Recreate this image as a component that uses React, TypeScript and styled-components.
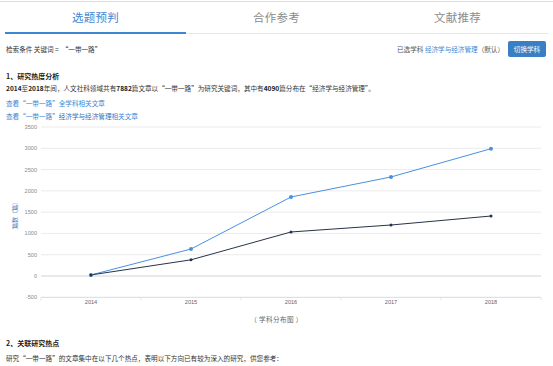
import styled, { createGlobalStyle } from "styled-components";

const GlobalStyle = createGlobalStyle`
  body {
    margin: 0;
    background: #ffffff;
    font-family: "Noto Sans CJK SC", "Noto Sans", sans-serif;
    color: #333333;
  }
`;

const Page = styled.div`
  width: 553px;
  height: 366px;
  overflow: hidden;
  border-top: 1px solid #dedede;
  margin-top: 1px;
  box-sizing: border-box;
`;

const TabBar = styled.div`
  display: flex;
  margin: 0 5px;
  border-bottom: 1px solid #e8e8e8;
`;

const Tab = styled.div<{ $active?: boolean }>`
  flex: 1;
  height: 30px;
  display: flex;
  align-items: center;
  justify-content: center;
  font-size: 11.5px;
  letter-spacing: 0.3px;
  color: ${(props) => (props.$active ? "#3d86d4" : "#8c8c8c")};
  border-bottom: 2px solid
    ${(props) => (props.$active ? "#3d86d4" : "transparent")};
  margin-bottom: -1px;
`;

const FilterRow = styled.div`
  display: flex;
  align-items: center;
  justify-content: space-between;
  margin: 7px 7px 0 6px;
  height: 16px;
  font-size: 6.6px;
`;

const FilterLeft = styled.div`
  color: #333;
`;

const FilterRight = styled.div`
  display: flex;
  align-items: center;
  gap: 4px;
  color: #555;
`;

const Link = styled.span<{ $strong?: boolean }>`
  color: ${(props) => (props.$strong ? "#2f6fb5" : "#3d86d4")};
`;

const SwitchButton = styled.button`
  height: 16px;
  width: 38px;
  padding: 0;
  border: none;
  border-radius: 2px;
  background: #3a7fc4;
  color: #ffffff;
  font-family: inherit;
  font-size: 6.6px;
`;

const Section = styled.div`
  padding: 0 6px;
`;

const SectionTitle = styled.div<{ $top: number }>`
  margin-top: ${(props) => props.$top}px;
  font-size: 7px;
  font-weight: 700;
  color: #222;
  height: 12px;
  line-height: 12px;
`;

const Para = styled.div<{ $top?: number }>`
  margin-top: ${(props) => props.$top ?? 0}px;
  font-size: 6.6px;
  line-height: 12px;
  height: 12px;
  color: #333;
  white-space: nowrap;

  b {
    font-weight: 700;
    color: #222;
  }
`;

const LinkLine = styled.div<{ $top: number }>`
  margin-top: ${(props) => props.$top}px;
  font-size: 6.6px;
  line-height: 12px;
  height: 12px;
  white-space: nowrap;
`;

const ChartBox = styled.svg`
  display: block;
`;

const Caption = styled.div`
  text-align: center;
  font-size: 6.6px;
  letter-spacing: 0.4px;
  color: #666;
  height: 12px;
  line-height: 12px;
  margin-top: 5px;
`;

const years = ["2014", "2015", "2016", "2017", "2018"];
const blueData = [25, 634, 1856, 2326, 2990];
const darkData = [25, 380, 1034, 1198, 1409];

const yOf = (v: number) => 276 - v * 0.04257;
const xOf = (i: number) => 91 + i * 100;

const Chart = () => {
  const ticks: number[] = [];
  for (let v = -500; v <= 3500; v += 500) ticks.push(v);
  const pts = (d: number[]) => d.map((v, i) => `${xOf(i)},${yOf(v)}`).join(" ");

  return (
    <ChartBox width={553} height={186} viewBox="0 122 553 186">
      {ticks.map((v) => (
        <g key={v}>
          <line
            x1={41}
            x2={541}
            y1={yOf(v)}
            y2={yOf(v)}
            stroke={v === 0 ? "#c8c8c8" : v === -500 ? "#d9e2ec" : "#e6e6e6"}
            strokeWidth={v === -500 ? 1.2 : 0.8}
          />
          <text
            x={37}
            y={yOf(v) + 2}
            textAnchor="end"
            fontSize={5.6}
            fill="#8a8a8a"
            fontFamily="Liberation Sans, sans-serif"
          >
            {v}
          </text>
        </g>
      ))}
      {[41, 141, 241, 341, 441, 541].map((x) => (
        <line key={x} x1={x} x2={x} y1={297.3} y2={300.5} stroke="#d9e2ec" strokeWidth={0.8} />
      ))}
      {years.map((y, i) => (
        <text
          key={y}
          x={xOf(i)}
          y={304}
          textAnchor="middle"
          fontSize={5.6}
          fill="#666"
          fontFamily="Liberation Sans, sans-serif"
        >
          {y}
        </text>
      ))}
      <text
        transform="translate(17 214) rotate(-90)"
        textAnchor="middle"
        fontSize={6}
        fill="#3d76b8"
        fontFamily="Noto Sans CJK SC, sans-serif"
      >
        篇数（篇）
      </text>
      <polyline points={pts(blueData)} fill="none" stroke="#4a90e2" strokeWidth={1} />
      <polyline points={pts(darkData)} fill="none" stroke="#26344a" strokeWidth={1} />
      {blueData.map((v, i) => (
        <circle key={`b${i}`} cx={xOf(i)} cy={yOf(v)} r={2} fill="#4a90e2" />
      ))}
      {darkData.map((v, i) => (
        <circle key={`d${i}`} cx={xOf(i)} cy={yOf(v)} r={1.5} fill="#26344a" />
      ))}
    </ChartBox>
  );
};

const App = () => {
  return (
    <>
      <GlobalStyle />
      <Page>
        <TabBar>
          <Tab $active>选题预判</Tab>
          <Tab>合作参考</Tab>
          <Tab>文献推荐</Tab>
        </TabBar>

        <FilterRow>
          <FilterLeft>检索条件 关键词 = &nbsp;“一带一路”</FilterLeft>
          <FilterRight>
            <span>
              已选学科 <Link>经济学与经济管理</Link>（默认）
            </span>
            <SwitchButton>切换学科</SwitchButton>
          </FilterRight>
        </FilterRow>

        <Section>
          <SectionTitle $top={13}>1、研究热度分析</SectionTitle>
          <Para>
            <b>2014</b>至<b>2018</b>年间，人文社科领域共有<b>7882</b>篇文章以“一带一路”为研究关键词，其中有
            <b>4090</b>篇分布在“经济学与经济管理”。
          </Para>
          <LinkLine $top={3}>
            <Link>查看“一带一路”全学科相关文章</Link>
          </LinkLine>
          <LinkLine $top={1}>
            <Link>查看“一带一路”</Link>
            <Link $strong>经济学与经济管理</Link>
            <Link>相关文章</Link>
          </LinkLine>
        </Section>

        <Chart />
        <Caption>（ 学科分布图 ）</Caption>

        <Section>
          <SectionTitle $top={12}>2、关联研究热点</SectionTitle>
          <Para $top={3}>
            研究“一带一路”的文章集中在以下几个热点，表明以下方向已有较为深入的研究，供您参考：
          </Para>
        </Section>
      </Page>
    </>
  );
};

export default App;
